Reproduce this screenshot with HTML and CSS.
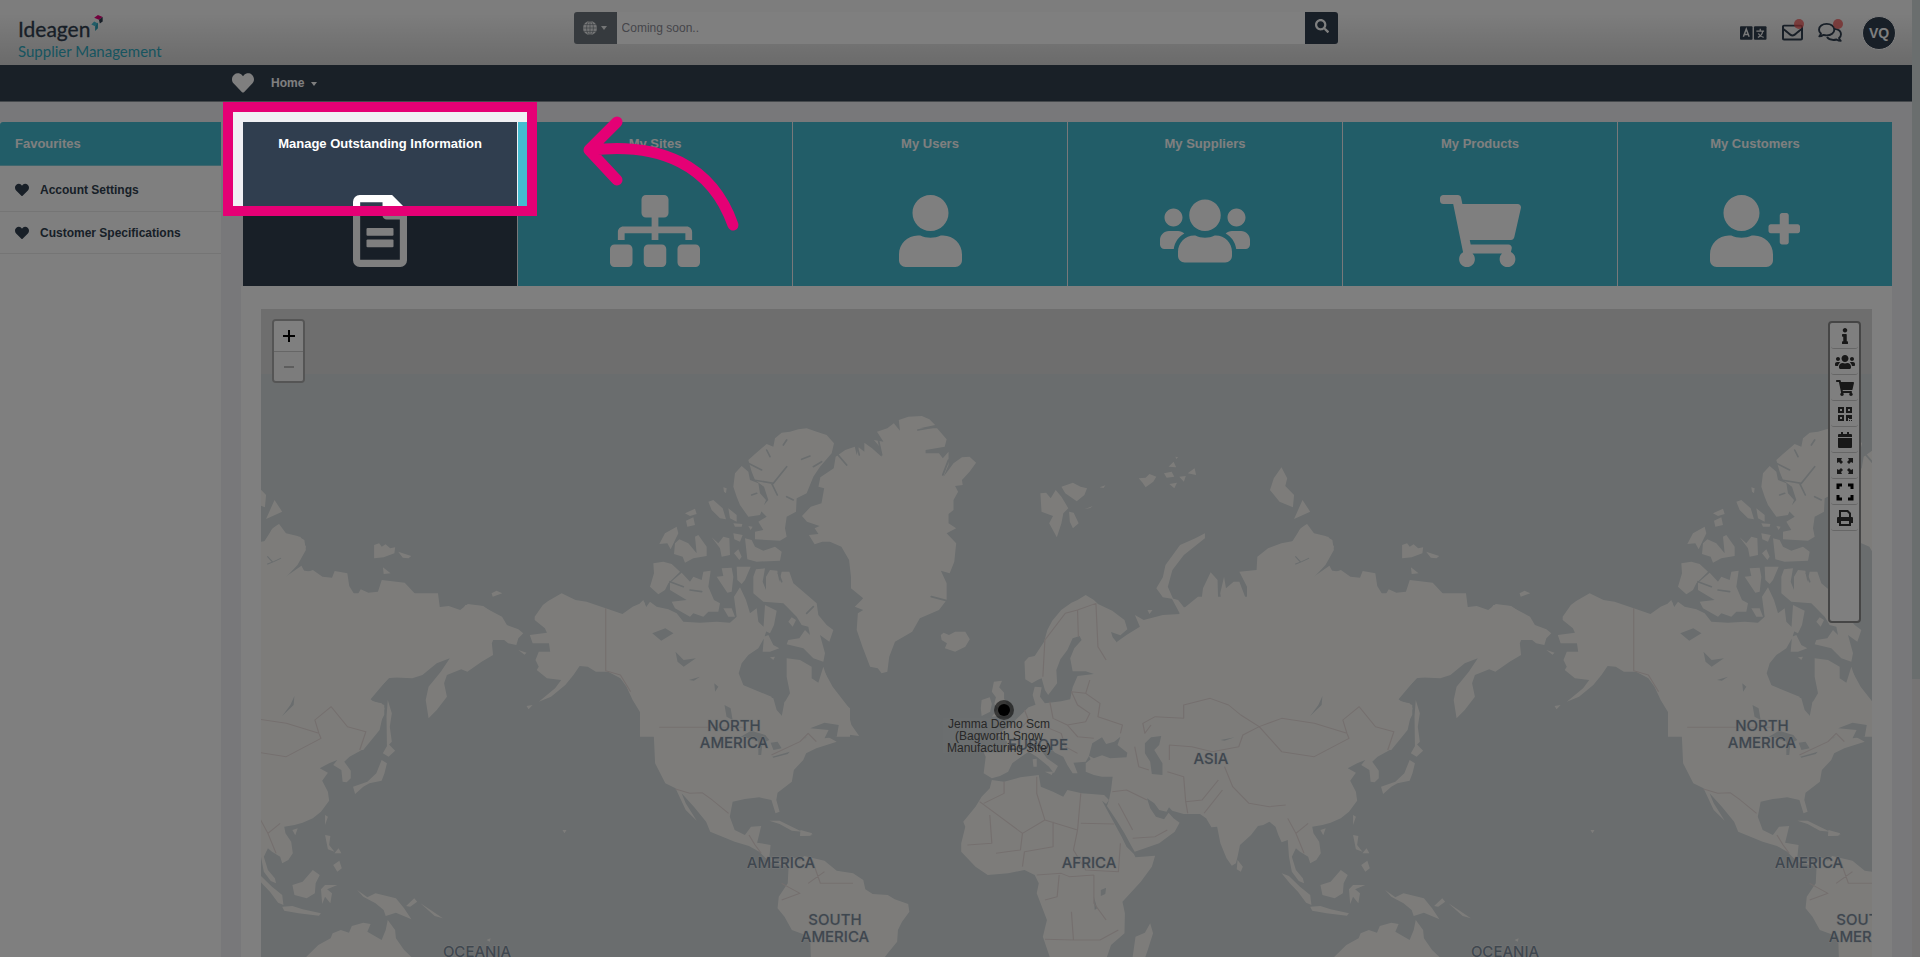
FILE: index.html
```html
<!DOCTYPE html>
<html lang="en">
<head>
<meta charset="utf-8">
<title>Ideagen Supplier Management</title>
<link rel="stylesheet" href="styles.css">
</head>
<body>
<svg class="sprite" aria-hidden="true">
  <symbol id="heart" viewBox="0 0 512 512"><path d="M462.3 62.6C407.5 15.9 326 24.3 275.7 76.2L256 96.5l-19.7-20.3C186.1 24.3 104.5 15.9 49.7 62.6c-62.8 53.6-66.1 149.8-9.9 207.9l193.5 199.8c12.5 12.9 32.8 12.9 45.3 0l193.5-199.8c56.3-58.1 53-154.3-9.8-207.9z"/></symbol>
  <symbol id="users" viewBox="0 0 640 512"><path d="M96 224c35.3 0 64-28.7 64-64s-28.7-64-64-64-64 28.7-64 64 28.7 64 64 64zm448 0c35.3 0 64-28.7 64-64s-28.7-64-64-64-64 28.7-64 64 28.7 64 64 64zm32 32h-64c-17.6 0-33.5 7.1-45.1 18.6 40.3 22.1 68.9 62 75.1 109.4h66c17.7 0 32-14.3 32-32v-32c0-35.3-28.7-64-64-64zm-256 0c61.9 0 112-50.1 112-112S381.9 32 320 32 208 82.1 208 144s50.1 112 112 112zm76.8 32h-8.3c-20.8 10-43.9 16-68.5 16s-47.6-6-68.5-16h-8.3C179.6 288 128 339.6 128 403.2V432c0 26.5 21.5 48 48 48h288c26.5 0 48-21.5 48-48v-28.8c0-63.6-51.6-115.2-115.2-115.2zm-223.7-13.4C161.5 263.1 145.6 256 128 256H64c-35.3 0-64 28.7-64 64v32c0 17.7 14.3 32 32 32h65.9c6.3-47.4 34.9-87.3 75.2-109.4z"/></symbol>
  <symbol id="cart" viewBox="0 0 576 512"><path d="M528.12 301.319l47.273-208C578.806 78.301 567.391 64 551.99 64H159.208l-9.166-44.81C147.758 8.021 137.93 0 126.529 0H24C10.745 0 0 10.745 0 24v16c0 13.255 10.745 24 24 24h69.883l70.248 343.435C147.325 417.1 136 435.222 136 456c0 30.928 25.072 56 56 56s56-25.072 56-56c0-15.674-6.447-29.835-16.824-40h209.647C430.447 426.165 424 440.326 424 456c0 30.928 25.072 56 56 56s56-25.072 56-56c0-22.172-12.888-41.332-31.579-50.405l5.517-24.276c3.413-15.018-8.002-29.319-23.403-29.319H218.117l-6.545-32h293.145c11.206 0 20.92-7.754 23.403-18.681z"/></symbol>
</svg>

<div class="page">
  <header class="header">
    <div class="logo">
      <span class="logo-name">Ideagen
        <svg class="logo-mark" viewBox="0 0 12 18"><path d="M3 3 7 0l5 2-4 3z" fill="#e5007a"/><path d="M8 5l4-3v5L9 9z" fill="#303e4f"/><path d="M0 10l3-3 4 2-3 3z" fill="#44bbd0"/><path d="M4 12l3-4v6l-3 3z" fill="#2a9db3"/></svg>
      </span>
      <span class="logo-product">Supplier Management</span>
    </div>
    <form class="search">
      <button class="search-scope" type="button" aria-label="Search scope">
        <svg width="14" height="14" viewBox="0 0 14 14"><circle cx="7" cy="7" r="7" fill="#e8eaec"/><path d="M7 0v14M0 7h14M1 3.600h12M1 10.400h12" stroke="#6d757c" stroke-width=".6"/><ellipse cx="7" cy="7" rx="3.400" ry="7" fill="none" stroke="#6d757c" stroke-width=".6"/></svg>
        <span class="caret"></span>
      </button>
      <input class="search-input" type="text" placeholder="Coming soon.." aria-label="Search">
      <button class="search-go" type="button" aria-label="Search">
        <svg width="14" height="14" viewBox="0 0 512 512" fill="#fff"><path d="M505 442.700L405.300 343c-4.500-4.500-10.600-7-17-7H372c27.600-35.300 44-79.700 44-128C416 93.100 322.900 0 208 0S0 93.100 0 208s93.100 208 208 208c48.300 0 92.700-16.400 128-44v16.300c0 6.400 2.500 12.500 7 17l99.700 99.700c9.400 9.400 24.600 9.400 33.900 0l28.300-28.300c9.400-9.400 9.400-24.600.1-34zM208 336c-70.700 0-128-57.200-128-128 0-70.700 57.200-128 128-128 70.700 0 128 57.200 128 128 0 70.700-57.200 128-128 128z"/></svg>
      </button>
    </form>
    <div class="tools">
      <button class="tool" type="button" aria-label="Language">
        <svg width="27" height="14" viewBox="0 0 28 14"><rect width="13" height="14" rx="1" fill="#303e4f"/><rect x="14.500" width="13" height="14" rx="1" fill="#303e4f"/><path d="M3.500 11 6.500 3 9.500 11M4.500 8.500h4" fill="none" stroke="#f2f2f2" stroke-width="1.500"/><path d="M17 5h8M21 2.500V5M18.500 11.500C21 10.500 23 8 23.500 5.500M19 7.500c1 2 3 3.500 5.500 4" fill="none" stroke="#f2f2f2" stroke-width="1.300"/></svg>
      </button>
      <button class="tool" type="button" aria-label="Messages">
        <svg width="21" height="21" viewBox="0 0 512 512" fill="#303e4f"><path d="M464 64H48C21.490 64 0 85.490 0 112v288c0 26.510 21.490 48 48 48h416c26.510 0 48-21.490 48-48V112c0-26.510-21.490-48-48-48zm0 48v40.805c-22.422 18.259-58.168 46.651-134.587 106.490-16.841 13.247-50.201 45.072-73.413 44.701-23.208.375-56.579-31.459-73.413-44.701C106.180 199.465 70.425 171.067 48 152.805V112h416zM48 400V214.398c22.914 18.251 55.409 43.862 104.938 82.646 21.857 17.205 60.134 55.186 103.062 54.955 42.717.231 80.509-37.199 103.053-54.947 49.528-38.783 82.032-64.401 104.947-82.653V400H48z"/></svg>
        <span class="dot"></span>
      </button>
      <button class="tool" type="button" aria-label="Chat">
        <svg width="24" height="21" viewBox="0 0 25 22" fill="none" stroke="#303e4f" stroke-width="2" stroke-linejoin="round"><path d="M9 2c4.600 0 8 2.600 8 6s-3.400 6-8 6c-1.200 0-2.300-.2-3.300-.5C4.500 14.300 3 15 1.300 15c1-1 1.500-2 1.700-3C1.800 11 1 9.600 1 8c0-3.400 3.400-6 8-6z"/><path d="M17.500 7.200c3.700.5 6.500 2.700 6.500 5.600 0 1.600-.8 3-2 4 .2 1 .8 2 1.700 3-1.700 0-3.200-.7-4.400-1.500-1 .3-2 .5-3.300.5-3 0-5.500-1.200-6.700-3"/></svg>
        <span class="dot"></span>
      </button>
      <button class="avatar" type="button">VQ</button>
    </div>
  </header>

  <nav class="nav">
    <a class="nav-fav" href="#" aria-label="Favourites"><svg width="22" height="22"><use href="#heart"/></svg></a>
    <a class="nav-home" href="#">Home <span class="caret"></span></a>
  </nav>

  <div class="content">
    <aside class="sidebar">
      <h2 class="sidebar-title">Favourites</h2>
      <a class="fav" href="#"><svg width="14" height="14"><use href="#heart"/></svg>Account Settings</a>
      <a class="fav" href="#"><svg width="14" height="14"><use href="#heart"/></svg>Customer Specifications</a>
    </aside>
    <main class="main">
      <div class="tiles">
        <a class="tile tile-active" href="#">Manage Outstanding Information
          <svg class="tile-icon" viewBox="0 0 384 512"><path fill-rule="evenodd" d="M48 0h230l106 106v358a48 48 0 0 1-48 48H48a48 48 0 0 1-48-48V48A48 48 0 0 1 48 0zm3 51v410h282V175H240a30 30 0 0 1-30-30V51z"/><rect x="96" y="234" width="192" height="56" rx="8"/><rect x="96" y="316" width="192" height="56" rx="8"/></svg></a>
        <a class="tile" href="#">My Sites
          <svg class="tile-icon" viewBox="0 0 640 512"><path d="M128 352H32c-17.670 0-32 14.330-32 32v96c0 17.670 14.330 32 32 32h96c17.670 0 32-14.330 32-32v-96c0-17.670-14.330-32-32-32zm-24-80h192v48h48v-48h192v48h48v-57.590c0-21.170-17.230-38.410-38.410-38.410H344v-64h40c17.670 0 32-14.330 32-32V32c0-17.670-14.330-32-32-32H256c-17.670 0-32 14.330-32 32v96c0 17.670 14.330 32 32 32h40v64H94.410C73.230 224 56 241.230 56 262.410V320h48v-48zm264 80h-96c-17.670 0-32 14.330-32 32v96c0 17.670 14.330 32 32 32h96c17.670 0 32-14.330 32-32v-96c0-17.670-14.330-32-32-32zm240 0h-96c-17.670 0-32 14.330-32 32v96c0 17.670 14.330 32 32 32h96c17.670 0 32-14.330 32-32v-96c0-17.670-14.330-32-32-32z"/></svg></a>
        <a class="tile" href="#">My Users
          <svg class="tile-icon" viewBox="0 0 448 512"><path d="M224 256c70.700 0 128-57.300 128-128S294.700 0 224 0 96 57.300 96 128s57.300 128 128 128zm89.600 32h-16.700c-22.200 10.200-46.900 16-72.900 16s-50.600-5.800-72.900-16h-16.700C60.200 288 0 348.200 0 422.400V464c0 26.500 21.500 48 48 48h352c26.500 0 48-21.500 48-48v-41.600c0-74.200-60.200-134.400-134.400-134.400z"/></svg></a>
        <a class="tile" href="#">My Suppliers
          <svg class="tile-icon" viewBox="0 0 640 512"><use href="#users"/></svg></a>
        <a class="tile" href="#">My Products
          <svg class="tile-icon" viewBox="0 0 576 512"><use href="#cart"/></svg></a>
        <a class="tile" href="#">My Customers
          <svg class="tile-icon" viewBox="0 0 640 512"><path d="M624 208h-64v-64c0-8.800-7.200-16-16-16h-32c-8.800 0-16 7.200-16 16v64h-64c-8.800 0-16 7.200-16 16v32c0 8.800 7.200 16 16 16h64v64c0 8.800 7.200 16 16 16h32c8.800 0 16-7.200 16-16v-64h64c8.800 0 16-7.200 16-16v-32c0-8.800-7.200-16-16-16zm-400 48c70.700 0 128-57.300 128-128S294.700 0 224 0 96 57.300 96 128s57.300 128 128 128zm89.600 32h-16.700c-22.200 10.200-46.900 16-72.900 16s-50.600-5.800-72.900-16h-16.700C60.200 288 0 348.200 0 422.400V464c0 26.500 21.500 48 48 48h352c26.500 0 48-21.500 48-48v-41.600c0-74.200-60.200-134.400-134.400-134.400z"/></svg></a>
      </div>
      <section class="panel">
        <div class="map">
          <svg class="world" viewBox="261 309 1611 648" preserveAspectRatio="xMinYMin slice">
            <defs>
              <g id="globe">
                <g class="land">
                  <!-- Europe, Asia and Africa -->
                  <g transform="translate(800 600) scale(.40816 .33333)">
                    <path d="M550 185 560 172 575 168 598 125 606 90 618 62 640 30 665 8 680 0 700 -15 720 0 730 12 765 32 795 60 802 88 785 106 762 96 766 112 775 125 772 140 786 146 792 125 808 112 830 88 850 62 880 54 905 45 925 50 935 30 975 -10 1568 -10V225L1510 235 1465 300 1500 315 1500 345 1475 400 1445 450 1415 470 1402 485 1418 512 1418 535 1408 547 1398 545 1395 510 1375 495 1385 480 1365 490 1342 505 1362 518 1348 542 1362 575 1365 602 1345 635 1325 655 1300 668 1280 675 1255 680 1258 700 1272 725 1276 760 1265 780 1250 790 1245 770 1225 755 1215 745 1205 770 1215 810 1232 835 1235 850 1222 843 1205 815 1198 770 1195 720 1180 727 1172 705 1165 680 1150 665 1135 675 1122 678 1105 705 1078 735 1072 770 1068 790 1058 797 1045 775 1030 730 1022 680 1008 682 995 655 980 642 940 642 912 632 904 622 898 635 880 630 868 610 850 595 858 625 872 650 892 658 903 638 915 655 930 668 918 695 880 730 845 745 820 755 812 738 795 700 775 660 752 618 757 600 762 570 766 530 740 530 720 525 700 515 700 490 712 478 708 468 700 485 670 488 680 520 668 520 655 495 645 470 625 458 608 438 590 450 605 475 632 498 622 520 610 500 580 470 560 455 542 470 520 490 510 515 490 528 470 535 450 520 455 470 450 457 500 457 508 425 480 402 512 382 530 358 560 322 577 314 570 285 575 260 592 262 588 290 600 310 640 304 662 298 668 262 680 228 720 222 700 214 668 214 662 175 672 145 690 120 685 108 668 115 655 150 638 178 628 210 630 250 608 285 600 270 592 235 582 240 568 250 552 238Z"/>
                    <path d="M470 540 500 545 540 532 585 525 590 560 620 575 645 590 655 570 690 580 745 585 757 600 750 612 740 602 768 665 788 710 800 740 818 762 822 772 870 767 862 800 835 845 790 905 796 940 795 1000 762 1035 752 1071 740 1150 700 1210 660 1200 620 1100 595 1010 605 960 580 880 585 850 575 825 550 810 510 820 460 825 430 800 395 755 395 730 405 680 400 665 430 620 445 590 465 565Z"/>
                    <path d="M858 970 865 1000 852 1050 838 1100 815 1071 822 1010 845 998ZM475 245 495 242 488 262 500 278 500 296 512 325 515 345 470 350 485 325 476 312 480 292 470 275ZM445 300 465 292 470 312 466 335 445 348 443 325ZM345 105 352 98 365 105 380 95 405 95 416 118 405 140 380 155 355 145 360 130 347 120ZM1072 780 1085 800 1080 815 1070 808ZM1180 820 1198 828 1225 860 1250 885 1253 915 1240 908 1220 875 1200 850ZM1250 920 1275 918 1300 928 1345 940 1340 947 1290 940 1255 932ZM1275 855 1300 845 1325 810 1342 825 1332 850 1330 880 1310 895 1280 885ZM1345 868 1355 855 1385 855 1360 868 1372 880 1368 910 1355 890 1348 912ZM1355 705 1368 708 1365 735 1378 755 1362 748ZM1375 795 1390 782 1396 805 1385 815ZM1395 760 1388 745 1378 760ZM1355 645 1362 650 1355 675ZM1275 690 1288 685 1282 706ZM570 478 580 476 580 500 572 500ZM600 515 620 515 617 525ZM572 296 590 298 585 306ZM100 400 108 365 120 348 126 375 145 408 125 405ZM1 690 30 700 25 707 0 708Z"/>
                    <!-- South America -->
                    <path d="M-60 770-30 795-20 770 0 782 10 768 60 782 90 812 130 820 155 840 160 868 178 882 215 885 232 898 265 912 268 935 250 965 240 990 238 1025 215 1060 190 1100 140 1200H30L25 1010-20 990-38 950-55 925-52 890-30 850-28 800Z"/>
                  </g>
                  <!-- Greenland, Svalbard and the Siberian coast -->
                  <g transform="translate(740 380) scale(.38265 .33333)">
                    <path d="M250 230 275 210 300 200 305 225 310 202 325 215 325 188 345 205 370 230 365 200 350 180 375 185 358 155 385 145 402 130 418 152 415 120 440 110 475 108 495 118 510 135 470 145 515 145 540 178 535 200 485 210 485 220 520 220 530 235 545 215 545 255 532 290 558 250 580 232 600 230 617 248 600 275 580 300 582 315 562 318 570 335 558 360 558 390 545 402 545 430 565 445 540 460 565 490 560 545 548 580 525 572 540 610 540 660 520 690 470 715 450 755 405 785 390 830 385 875 370 880 360 865 340 860 320 800 305 750 308 700 322 690 300 680 322 655 290 625 290 590 285 540 265 500 235 485 215 485 195 493 180 465 205 462 195 445 208 438 175 425 162 408 185 380 213 370 220 325 205 320 210 292 245 265Z"/>
                    <path d="M980 790 1010 765 1045 740 1032 705 1055 720 1105 705 1150 702 1128 655 1145 660 1160 682 1185 685 1215 712 1205 670 1210 625 1230 577 1248 600 1250 680 1235 740 1222 755 1245 752 1265 710 1255 640 1265 590 1270 625 1290 605 1305 605 1325 665 1325 620 1305 575 1350 570 1352 530 1380 505 1415 490 1450 482 1462 450 1482 432 1500 460 1530 468 1548 480 1552 510 1530 555 1495 598 1535 570 1568 575V1020H950Z"/>
                    <path d="M1415 262 1430 295 1425 318 1448 345 1445 382 1410 365 1385 330 1395 295ZM1470 360 1490 395 1448 417ZM1215 460 1215 475 1160 525 1130 570 1118 620 1132 657 1105 652 1088 625 1105 592 1112 555 1150 495 1190 475ZM785 340 800 338 812 355 825 330 840 350 858 385 845 400 840 430 828 472 808 430 818 408 788 395ZM840 320 870 308 890 320 907 325 900 345 880 364 850 340ZM860 395 872 398 885 430 870 445 862 425ZM1042 295 1060 293 1070 282 1088 290 1080 305 1060 322 1052 308ZM1108 280 1128 275 1135 290 1115 293ZM1120 260 1133 245 1140 262ZM1148 290 1165 288 1160 305ZM1170 280 1188 265 1192 285ZM1122 312 1142 308 1135 325ZM1138 230 1145 232 1140 237ZM1065 690 1078 690 1070 702ZM940 322 955 316 950 324ZM900 388 922 378 915 384Z"/>
                  </g>
                  <g transform="translate(1228 280) scale(.38265 .33333)">
                    <path d="M150 800 165 790 190 745 205 733 215 755 235 770 262 770 277 800 262 838 220 893 265 857 275 878 295 870 320 890 345 893 352 873 385 880 390 918 408 952 420 928 440 938 465 935 475 900 535 908 565 945 610 950 622 982 650 978 680 990 700 972 740 978 795 1022V1080H150ZM455 795 468 790 475 800 485 793 497 805 510 802 508 820 480 832 455 835ZM518 815 552 828 545 835 530 833ZM478 862 498 880 480 882ZM762 940 775 932 790 940 765 950Z"/>
                  </g>
                  <!-- Far East and Australia -->
                  <g transform="translate(1228 600) scale(.40816 .33333)">
                    <path d="M149 -20H583L590 45 605 20 640 38 650 15 690 18 740 50 752 75 780 88 792 100 780 115 775 135 755 130 725 100 715 130 718 165 690 185 655 215 640 208 605 225 598 250 605 290 580 330 560 355 553 300 560 260 590 215 612 175 580 190 545 225 520 235 465 232 415 295 425 305 445 310 452 325 440 390 400 450 149 450ZM457 440 462 432 478 452 462 470 448 460ZM445 480 458 490 452 520 445 542 415 550 400 560 380 582 375 560 410 545 432 520ZM460 300 470 340 465 380 470 425 458 440 457 350ZM385 870 410 892 430 880 480 895 500 925 518 958 480 938 455 948 450 930 430 910 400 890ZM505 918 525 895 532 905 515 920ZM260 1071 290 1035 320 1015 325 1000 345 990 365 998 372 978 400 968 418 972 410 995 445 1020 455 990 460 960 478 990 480 1015 500 1050 518 1071 540 1140 520 1200H260ZM540 910 565 930 595 955 575 948ZM702 1020 712 1015 710 1025Z"/>
                  </g>
                  <!-- North America -->
                  <g transform="translate(200 600) scale(.40816 .33333)">
                    <path d="M820 50 840 15 853 3 886 -20 920 0 947 5 994 25 1035 42 1060 20 1088 5 1095 28 1130 30 1180 70 1290 75 1320 250 1400 290 1412 335 1425 350 1432 305 1500 300 1530 215 1550 260 1588 320 1585 345 1530 368 1505 385 1478 420 1520 375 1535 382 1530 405 1560 425 1510 445 1485 460 1478 480 1455 510 1450 545 1415 578 1412 600 1420 635 1410 640 1400 600 1370 592 1335 597 1305 605 1298 650 1310 690 1335 705 1350 680 1375 678 1365 728 1398 735 1395 770 1410 782 1440 785 1440 800 1395 785 1370 755 1345 738 1310 725 1250 695 1240 665 1210 620 1180 580 1190 610 1217 662 1190 630 1165 565 1140 550 1115 490 1112 410 1085 350 1060 300 1045 260 1030 235 1000 215 970 215 950 200 930 198 915 225 895 255 860 290 830 305 870 265 885 240 850 235 825 210 830 200 822 180 830 155 858 155 855 130 815 130 808 105 850 98 845 85 820 60ZM1395 662 1420 662 1450 680 1475 695 1450 692 1420 672ZM1475 695 1502 705 1470 708ZM800 318 815 315 805 328ZM888 690 898 690 893 700ZM780 150 800 158 795 164Z"/>
                  </g>
                  <g transform="translate(640 400) scale(.33333)">
                    <path d="M0 610 10 600 18 622 30 605 50 620 85 628 110 640 130 665 180 668 230 665 270 668 290 650 282 590 300 562 318 600 330 640 350 625 355 665 380 690 372 715 355 745 325 765 305 790 296 820 312 860 360 885 400 895 410 930 428 950 435 905 450 880 440 830 440 775 480 780 515 800 515 835 535 848 550 800 570 860 600 900 630 925V1010H0ZM325 180 345 162 380 132 400 140 405 115 425 98 450 95 475 88 500 85 530 95 560 105 582 130 575 160 540 200 520 230 500 280 470 295 468 335 440 350 435 385 440 410 420 422 345 418 345 395 370 390 355 365 380 350 360 330 385 300 372 260 345 240 335 215ZM305 198 325 215 330 240 355 250 360 280 378 300 360 345 325 350 300 315 290 290 280 260 285 220ZM315 415 335 420 345 440 370 452 405 440 425 455 420 482 350 485 322 478ZM205 305 220 300 248 325 258 358 240 355 215 330ZM265 325 290 345 290 365 270 355ZM58 432 75 400 110 380 115 400 92 448 82 430ZM105 430 118 418 145 430 170 460 165 410 175 405 200 440 200 468 160 475 135 488 128 470 102 462ZM215 412 235 430 250 410 268 415 270 465 245 470 240 445ZM280 400 308 405 300 425 283 418ZM282 460 295 448 305 470 298 480ZM135 340 165 326 170 342 150 348ZM138 362 160 352 165 375 142 380ZM250 262 260 265 258 280 252 275ZM280 370 307 372 305 380 285 380ZM325 378 338 380 332 390ZM40 490 70 485 95 492 120 515 85 550 75 570 55 583 30 560 42 520ZM90 548 125 518 150 545 160 530 185 540 190 515 212 512 205 560 222 600 240 610 235 635 205 635 190 650 160 640 150 650 105 625 95 605 140 600 90 570ZM230 530 250 528 245 505 275 503 280 530 275 575 262 578 250 560ZM290 500 332 500 315 540 305 552 292 540ZM340 530 348 508 375 505 368 545 378 570 378 530 390 510 412 512 418 545 425 515 448 515 460 550 490 575 530 610 535 645 560 675 580 690 568 725 540 705 555 760 550 785 520 775 490 745 440 733 445 720 478 715 495 690 510 705 505 680 485 675 470 650 430 610 370 605 340 580ZM368 755 372 710 385 705 400 735 418 745 390 755ZM375 615 410 632 402 675 390 700 370 690ZM445 665 455 652 468 660 458 680ZM250 625 275 625 285 650 265 650ZM390 772 405 770 400 780Z"/>
                  </g>
                </g>
                <!-- Inland water -->
                <g class="water">
                  <path transform="translate(800 600) scale(.40816 .33333)" d="M708 467 716 430 740 412 750 432 770 425 785 410 778 435 802 458 800 472 760 475 740 466 720 475ZM845 430 860 412 885 408 880 435 868 450 888 490 888 525 862 522 858 485 845 460ZM737 870 750 863 748 882 737 888ZM1280 288 1278 315 1250 348 1270 315ZM1030 420 1065 412 1040 422ZM720 890 728 925 722 930Z"/>
                  <path transform="translate(200 600) scale(.40816 .33333)" d="M1108 100 1140 85 1160 100 1130 122ZM1165 155 1185 180 1215 175 1185 200 1170 185ZM1285 315 1300 325 1305 360 1290 350ZM1325 410 1350 392 1385 405 1395 420 1378 430 1375 465 1368 465 1368 425 1345 415ZM1398 428 1415 425 1425 445 1405 450ZM1402 470 1445 455 1440 462 1405 473ZM1198 240 1225 230 1210 242ZM1260 250 1270 260 1262 275ZM1495 385 1530 368 1565 375 1560 410 1530 415 1540 390Z"/>
                  <g class="fjord">
                    <path transform="translate(640 400) scale(.33333)" d="M340 240 400 250 440 200M395 250 412 285M485 178 510 168M520 200 545 185M365 210 325 190M130 560 90 545M590 160 620 195M650 135 658 165M712 105 725 165M425 545 415 520M435 620 455 640M440 120 430 135M380 150 390 170M460 300 440 290M350 280 335 285M150 570 185 575M520 620 500 640"/>
                    <path transform="translate(740 380) scale(.38265 .33333)" d="M465 150 512 140M530 285 545 240M500 650 540 662"/>
                    <path class="lake" transform="translate(740 380) scale(.38265 .33333)" d="M1452 552 1468 545 1486 535M1452 530 1464 545"/>
                  </g>
                </g>
                <g class="border">
                  <path transform="translate(800 600) scale(.40816 .33333)" d="M595 230 600 120 650 40 680 30 682 110M680 30 725 10 730 140 750 180M612 305 620 355 655 375 700 365 710 340 680 315 665 275 700 280 710 240M700 280 735 310 730 350 790 375 785 400M655 375 680 410 720 415M550 330 560 360 530 400M600 380 640 400 650 440 680 460M860 375 845 400 840 370 870 350 940 355 940 315 1005 295 1050 315 1080 345 1125 380 1085 405 1075 440 1010 455 960 440 905 435 905 480M1125 380 1180 355 1260 370 1340 400 1345 415 1260 470 1180 455 1125 380M1340 400 1330 360 1370 320 1410 380 1455 395 1440 450M1040 500 1060 560 1100 610 1150 620 1190 615M1025 540 985 600 945 605 940 530 900 515M1035 570 990 640M945 605 950 640M765 575 800 570 850 600M780 610 815 690M815 715 870 710 900 690M820 440 830 500 855 510M500 545 500 580 450 610M440 605 545 700 600 660 680 690 688 580M580 530 580 580 600 660M688 670 770 672M465 645 470 730 410 735M545 700 540 750 480 760M620 665 620 740 550 755 545 800M680 690 670 750 700 810 780 815 785 730M580 825 640 820 660 830 720 825M635 825 630 890 600 900M720 825 720 910 750 960M665 935 670 1020 600 1018M670 1020 735 1020 780 990M1195 655 1215 700 1245 670M1215 700 1235 760M-45 850 0 880-45 900M20 850 60 815M30 780 50 850 130 850"/>
                  <path transform="translate(200 600) scale(.40816 .33333)" d="M994 25V212L1030 225 1055 275M1125 382H1330M1400 465 1470 425 1490 400 1510 425M1165 567 1200 580 1230 578 1255 600 1295 640M1345 705 1360 735 1375 760"/>
                </g>
              </g>
              <g id="labels" class="place">
                <text x="734" y="731">NORTH</text><text x="734" y="748">AMERICA</text>
                <text x="781" y="868">AMERICA</text>
                <text x="835" y="925">SOUTH</text><text x="835" y="942">AMERICA</text>
                <text x="1038" y="750">EUROPE</text><text x="1211" y="764">ASIA</text>
                <text x="1089" y="868">AFRICA</text><text x="1505" y="957">OCEANIA</text>
              </g>
            </defs>
            <rect class="void" x="261" y="309" width="4000" height="65"/>
            <use href="#globe" x="-1028"/><use href="#globe"/><use href="#globe" x="1028"/>
            <use href="#labels" x="-1028"/><use href="#labels"/><use href="#labels" x="1028"/>
            <circle cx="1004" cy="710" r="10" fill="#000" fill-opacity=".55"/><circle cx="1004" cy="710" r="6"/>
            <rect x="943" y="718" width="112" height="35" fill="#fff" fill-opacity=".08"/>
            <g class="site"><text x="999" y="728">Jemma Demo Scm</text><text x="999" y="740">(Bagworth Snow</text><text x="999" y="752">Manufacturing Site)</text></g>
          </svg>
          <div class="zoom">
            <button type="button" aria-label="Zoom in"><svg width="12" height="12"><path d="M0 6h12M6 0v12" stroke="#000" stroke-width="2"/></svg></button>
            <button type="button" aria-label="Zoom out" disabled><svg width="12" height="12"><path d="M1 6h10" stroke="#bbb" stroke-width="2"/></svg></button>
          </div>
          <div class="toolbar">
            <button type="button" aria-label="Info"><svg width="18" height="16" viewBox="-192 0 576 512"><path d="M20 424.229h20V279.771H20c-11.046 0-20-8.954-20-20V212c0-11.046 8.954-20 20-20h112c11.046 0 20 8.954 20 20v212.229h20c11.046 0 20 8.954 20 20V492c0 11.046-8.954 20-20 20H20c-11.046 0-20-8.954-20-20v-47.771c0-11.046 8.954-20 20-20zM96 0C56.235 0 24 32.235 24 72s32.235 72 72 72 72-32.235 72-72S135.764 0 96 0z"/></svg></button>
            <button type="button" aria-label="Suppliers"><svg width="20" height="16"><use href="#users"/></svg></button>
            <button type="button" aria-label="Products"><svg width="18" height="16"><use href="#cart"/></svg></button>
            <button type="button" aria-label="QR code"><svg width="16" height="16" viewBox="0 0 16 16"><path fill-rule="evenodd" d="M1 1h6v6H1zM3 3v2h2V3zM9 1h6v6H9zM11 3v2h2V3zM1 9h6v6H1zM3 11v2h2v-2zM9 9h6v4h-3v-1h-1v3H9zM12 14h1v1h-1zM14 14h1v1h-1z"/></svg></button>
            <button type="button" aria-label="Calendar"><svg width="16" height="16" viewBox="0 0 16 16"><path d="M4 0h2v2h4V0h2v2h2q1 0 1 1v2H1V3q0-1 1-1h2zM1 6h14v9q0 1-1 1H2q-1 0-1-1z"/></svg></button>
            <button type="button" aria-label="Expand"><svg width="18" height="18" viewBox="0 0 18 18"><path d="M1 1h5L5 3l2 2-2 2-2-2-2 1zM17 1h-5l1 2-2 2 2 2 2-2 2 1zM1 17h5l-1-2 2-2-2-2-2 2-2-1zM17 17h-5l1-2-2-2 2-2 2 2 2-1z"/></svg></button>
            <button type="button" aria-label="Full screen"><svg width="18" height="18" viewBox="0 0 18 18"><path d="M2 6V2h4M12 2h4v4M16 12v4h-4M6 16H2v-4" fill="none" stroke="#000" stroke-width="3"/></svg></button>
            <button type="button" aria-label="Print"><svg width="18" height="18" viewBox="0 0 18 18"><path fill-rule="evenodd" d="M3 1h9l3 3v4h1q1 0 1 1v5h-2v3H3v-3H1V9q0-1 1-1h1zM5 3v5h8V5l-2-2zM5 12v3h8v-3z"/></svg></button>
          </div>
        </div>
      </section>
    </main>
  </div>
</div>
<div class="scroll" aria-hidden="true"><div class="scroll-thumb"></div></div>

<div class="spotlight"></div>
<svg class="arrow" width="180" height="130" viewBox="570 108 180 130" aria-hidden="true"><path d="M591 150C660 142 712 165 733 225M617 122 589 150 617 180" fill="none" stroke="#e50075" stroke-width="11" stroke-linecap="round" stroke-linejoin="round"/></svg>
</body>
</html>
```
FILE: styles.css
```css
* { box-sizing: border-box; }
body {
  margin: 0;
  display: flex;
  height: 100vh;
  overflow: hidden;
  position: relative;
  background: #f0f0f4;
  font-family: "Liberation Sans", Arial, sans-serif;
  font-size: 12px;
  color: #303e4f;
}
a { color: inherit; text-decoration: none; }
button { border: 0; padding: 0; margin: 0; font: inherit; cursor: pointer; }
.sprite { position: absolute; width: 0; height: 0; }
.page { flex: 1; min-width: 0; display: flex; flex-direction: column; }

.header {
  display: grid;
  grid-template-columns: 1fr 40% 1fr;
  height: 65px;
  background: linear-gradient(#fbfbfb 20%, #d6d6d6);
}
.logo { display: flex; flex-direction: column; padding: 15px 0 0 18px; font-family: Lato, sans-serif; }
.logo-name { display: flex; gap: 1px; font-size: 21px; line-height: 28px; -webkit-text-stroke: 0.3px currentColor; }
.logo-mark { width: 12px; height: 17px; }
.logo-product { font-size: 15px; line-height: 16px; color: #2fa9bf; }
.search { display: flex; align-self: start; height: 32px; margin-top: 12px; }
.search-scope {
  display: flex; align-items: center; justify-content: center; gap: 4px;
  width: 43px; background: #6d757c; color: #e8eaec; border-radius: 3px 0 0 3px;
}
.search-input {
  flex: 1; min-width: 0; border: 0; padding: 0 5px;
  background: #fff; font: inherit; color: #303e4f;
}
.search-input::placeholder { color: #8c8c96; opacity: 1; }
.search-go { width: 33px; background: #303e4f; border-radius: 0 3px 3px 0; padding-bottom: 4px; }
.search-go svg { vertical-align: middle; }
.caret { display: inline-block; border: 3px solid transparent; border-top: 4px solid currentColor; border-bottom: 0; vertical-align: middle; }
.tools { display: flex; justify-content: flex-end; align-items: center; gap: 15px; padding-right: 16px; }
.tool { position: relative; display: flex; background: none; }
.dot { position: absolute; top: -3px; right: -1px; width: 10px; height: 10px; border-radius: 50%; background: rgba(240, 80, 80, .75); }
.avatar {
  width: 34px; height: 34px; margin-left: 5px; border: 1px solid #fff; border-radius: 50%;
  background: #303e4f; color: #fff; font-size: 14px; font-weight: bold;
}

.nav {
  display: flex; align-items: center; gap: 17px; height: 37px; padding-left: 232px;
  background: #32404f; border-bottom: 1px solid #8a9298; color: #fff; font-weight: bold;
}
.nav-fav { display: flex; fill: #fff; }
.nav .caret { margin-left: 3px; }

.content { flex: 1; min-height: 0; display: flex; gap: 20px; padding: 20px 20px 0 0; }
.sidebar { width: 221px; background: #fff; }
.sidebar-title {
  margin: 0; padding: 0 15px; line-height: 43px; background: #44bbd0; color: #fff;
  font-size: 13px; border-radius: 3px 0 0 0; border-bottom: 1px solid #7fcddb;
}
.fav {
  display: flex; align-items: center; gap: 11px; height: 42px; padding: 0 15px;
  border-bottom: 1px solid #eaeaea; font-weight: bold; fill: #303e4f;
}
.sidebar-title + .fav { height: 46px; padding-top: 2px; }
.main { flex: 1; min-width: 0; display: flex; flex-direction: column; }
.tiles { display: grid; grid-template-columns: repeat(6, 1fr); gap: 1px; margin-left: 2px; }
.tile {
  display: flex; flex-direction: column; align-items: center; gap: 41px;
  padding: 12px 0 19px; background: #44bbd0; color: #fff; fill: #fff;
  font-size: 13px; line-height: 20px; font-weight: bold;
}
.tile-active { background: #303e4f; }
.tile-icon { height: 72px; }
.panel { flex: 1; min-height: 0; display: flex; padding: 23px 20px 0; background: #fff; }
.map { position: relative; flex: 1; overflow: hidden; background: #d4dadc; }
.world { display: block; width: 100%; height: 100%; }
.void { fill: #ddd; }
.land { fill: #faf9f5; }
.water { fill: #d4dadc; }
.fjord { fill: none; stroke: #d4dadc; stroke-width: 5; stroke-linecap: round; }
.lake { stroke-width: 3; }
.border { fill: none; stroke: #eadfdd; stroke-width: 3; stroke-linejoin: round; }
.place {
  font: 500 15px Inter, sans-serif; text-anchor: middle;
  fill: #7f8e9f; stroke: #e8eaea; stroke-width: 1px; paint-order: stroke;
}
.site { font-size: 12px; text-anchor: middle; fill: #505050; }
.zoom {
  position: absolute; top: 10px; left: 11px; width: 33px;
  border: 2px solid #aaa; border-radius: 4px; overflow: hidden;
}
.zoom button { display: flex; align-items: center; justify-content: center; width: 100%; height: 30px; background: #fff; }
.zoom button + button { border-top: 1px solid #ccc; background: #f8f8f8; }
.toolbar {
  position: absolute; top: 12px; right: 11px; width: 33px; height: 302px; padding: 0 1px;
  border: 2px solid #8c8c8c; border-radius: 4px; background: #fff;
}
.toolbar button {
  display: flex; align-items: center; justify-content: center; width: 100%; height: 26px;
  background: #fff; border-bottom: 1px solid #ccc; border-radius: 3px; fill: #303030;
}

.scroll { width: 8px; background: #ebe8e8; }
.scroll-thumb { height: 71%; background: #d4dddd; }
.spotlight {
  position: absolute; top: 102px; left: 223px; width: 314px; height: 114px;
  border: 10px solid #e50075; box-shadow: 0 0 0 3000px rgba(0, 0, 0, .5); pointer-events: none;
}
.arrow { position: absolute; top: 108px; left: 570px; pointer-events: none; }
```
